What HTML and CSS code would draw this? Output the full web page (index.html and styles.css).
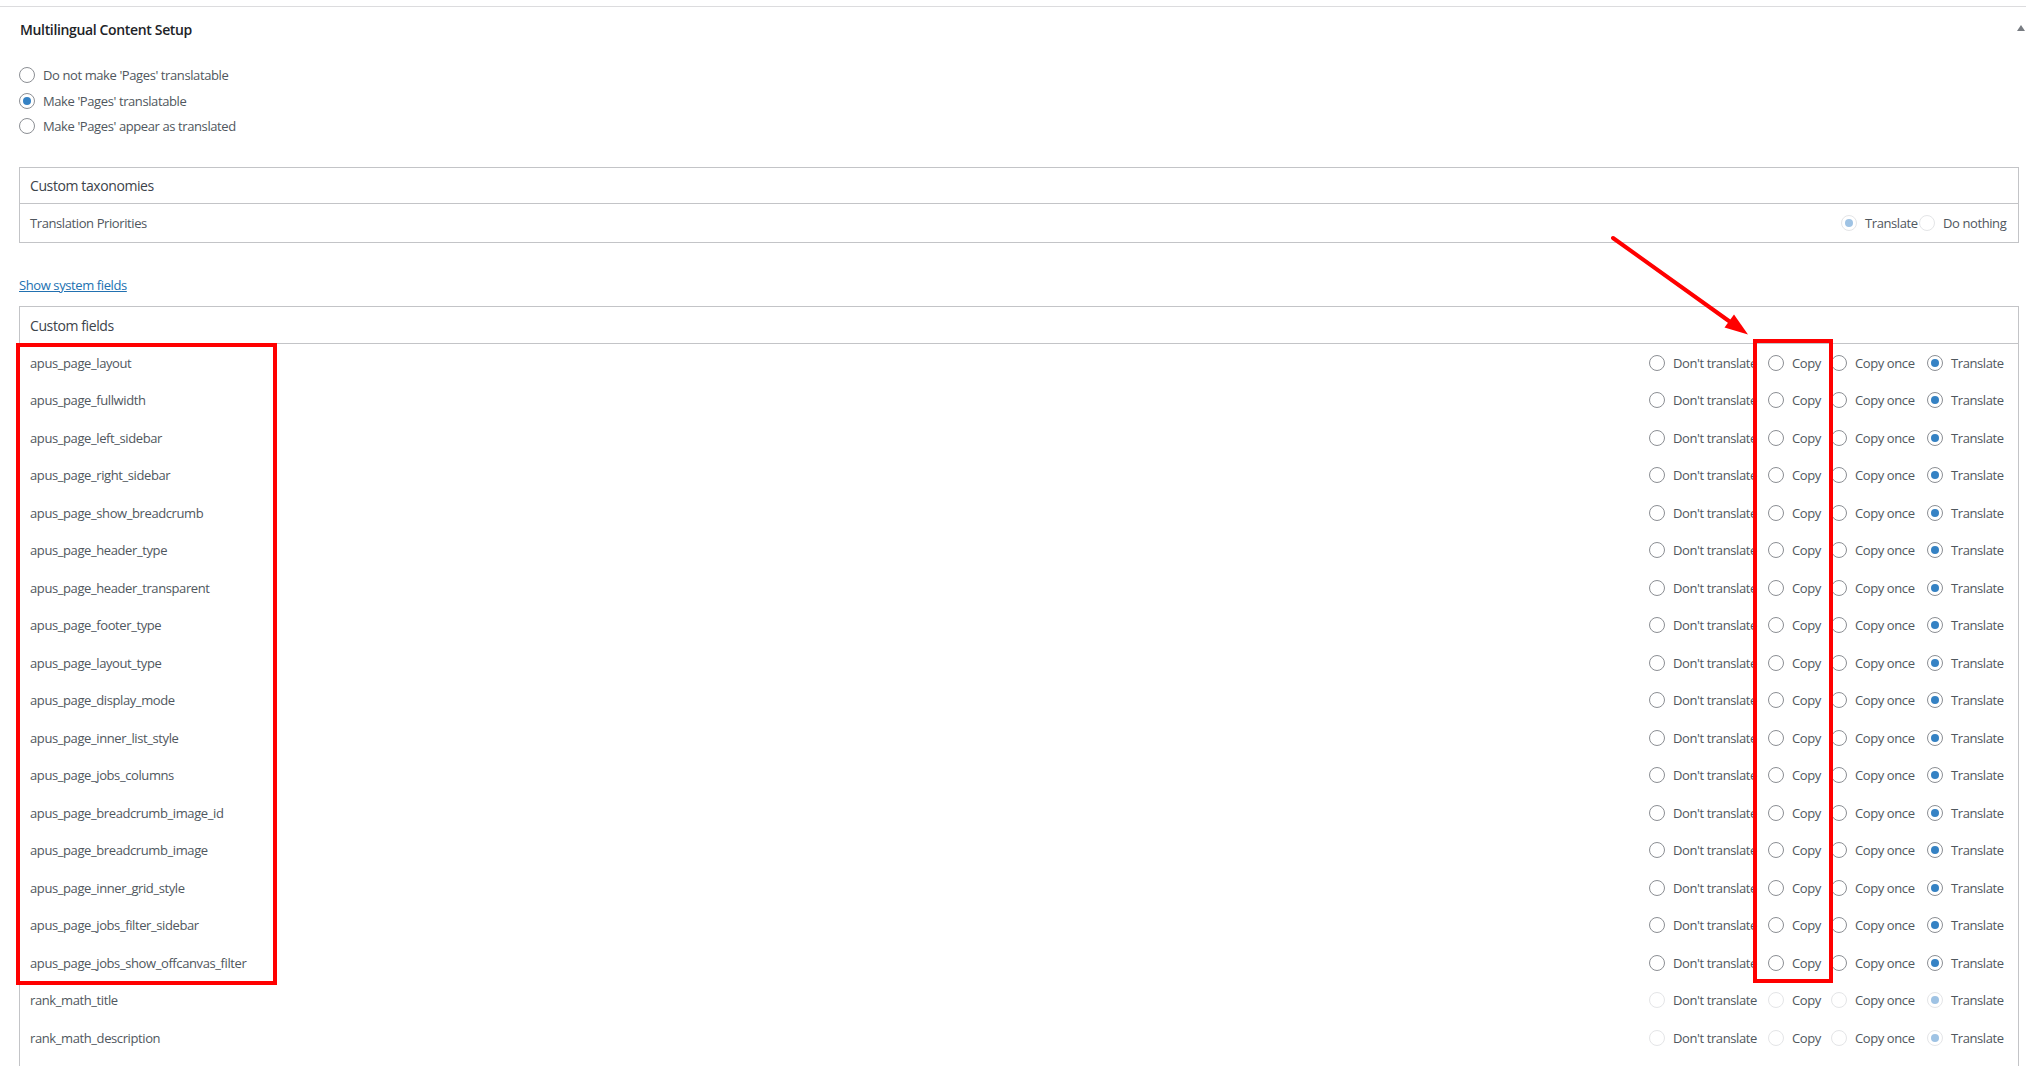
FILE: index.html
```html
<!DOCTYPE html>
<html>
<head>
<meta charset="utf-8">
<link rel="stylesheet" href="styles.css">
</head>
<body>
<div class="topline"></div>
<div class="wrap">
  <div class="section-head">
    <h2 class="title">Multilingual Content Setup</h2>
    <span class="toggle"></span>
  </div>
  <div class="mode-list">
    <label class="mode"><input class="rb" type="radio" name="mode"><span>Do not make 'Pages' translatable</span></label>
    <label class="mode"><input class="rb" type="radio" name="mode" checked><span>Make 'Pages' translatable</span></label>
    <label class="mode"><input class="rb" type="radio" name="mode"><span>Make 'Pages' appear as translated</span></label>
  </div>

  <div class="box tax">
    <div class="box-head">Custom taxonomies</div>
    <div class="row tax-row">
      <span class="name">Translation Priorities</span>
      <div class="opts opts-tax">
        <label class="opt"><input class="rb" type="radio" name="tp" checked disabled><span>Translate</span></label>
        <label class="opt"><input class="rb" type="radio" name="tp" disabled><span>Do nothing</span></label>
      </div>
    </div>
  </div>

  <div class="link-line"><a class="sys-link" href="#">Show system fields</a></div>

  <div class="box cf">
    <div class="box-head cf-head">Custom fields</div>
    <div class="row"><span class="name">apus_page_layout</span><div class="opts opts-cf"><label class="opt"><input class="rb" type="radio" name="f1"><span>Don't translate</span></label><label class="opt"><input class="rb" type="radio" name="f1"><span>Copy</span></label><label class="opt"><input class="rb" type="radio" name="f1"><span>Copy once</span></label><label class="opt"><input class="rb" type="radio" name="f1" checked><span>Translate</span></label></div></div>
    <div class="row"><span class="name">apus_page_fullwidth</span><div class="opts opts-cf"><label class="opt"><input class="rb" type="radio" name="f2"><span>Don't translate</span></label><label class="opt"><input class="rb" type="radio" name="f2"><span>Copy</span></label><label class="opt"><input class="rb" type="radio" name="f2"><span>Copy once</span></label><label class="opt"><input class="rb" type="radio" name="f2" checked><span>Translate</span></label></div></div>
    <div class="row"><span class="name">apus_page_left_sidebar</span><div class="opts opts-cf"><label class="opt"><input class="rb" type="radio" name="f3"><span>Don't translate</span></label><label class="opt"><input class="rb" type="radio" name="f3"><span>Copy</span></label><label class="opt"><input class="rb" type="radio" name="f3"><span>Copy once</span></label><label class="opt"><input class="rb" type="radio" name="f3" checked><span>Translate</span></label></div></div>
    <div class="row"><span class="name">apus_page_right_sidebar</span><div class="opts opts-cf"><label class="opt"><input class="rb" type="radio" name="f4"><span>Don't translate</span></label><label class="opt"><input class="rb" type="radio" name="f4"><span>Copy</span></label><label class="opt"><input class="rb" type="radio" name="f4"><span>Copy once</span></label><label class="opt"><input class="rb" type="radio" name="f4" checked><span>Translate</span></label></div></div>
    <div class="row"><span class="name">apus_page_show_breadcrumb</span><div class="opts opts-cf"><label class="opt"><input class="rb" type="radio" name="f5"><span>Don't translate</span></label><label class="opt"><input class="rb" type="radio" name="f5"><span>Copy</span></label><label class="opt"><input class="rb" type="radio" name="f5"><span>Copy once</span></label><label class="opt"><input class="rb" type="radio" name="f5" checked><span>Translate</span></label></div></div>
    <div class="row"><span class="name">apus_page_header_type</span><div class="opts opts-cf"><label class="opt"><input class="rb" type="radio" name="f6"><span>Don't translate</span></label><label class="opt"><input class="rb" type="radio" name="f6"><span>Copy</span></label><label class="opt"><input class="rb" type="radio" name="f6"><span>Copy once</span></label><label class="opt"><input class="rb" type="radio" name="f6" checked><span>Translate</span></label></div></div>
    <div class="row"><span class="name">apus_page_header_transparent</span><div class="opts opts-cf"><label class="opt"><input class="rb" type="radio" name="f7"><span>Don't translate</span></label><label class="opt"><input class="rb" type="radio" name="f7"><span>Copy</span></label><label class="opt"><input class="rb" type="radio" name="f7"><span>Copy once</span></label><label class="opt"><input class="rb" type="radio" name="f7" checked><span>Translate</span></label></div></div>
    <div class="row"><span class="name">apus_page_footer_type</span><div class="opts opts-cf"><label class="opt"><input class="rb" type="radio" name="f8"><span>Don't translate</span></label><label class="opt"><input class="rb" type="radio" name="f8"><span>Copy</span></label><label class="opt"><input class="rb" type="radio" name="f8"><span>Copy once</span></label><label class="opt"><input class="rb" type="radio" name="f8" checked><span>Translate</span></label></div></div>
    <div class="row"><span class="name">apus_page_layout_type</span><div class="opts opts-cf"><label class="opt"><input class="rb" type="radio" name="f9"><span>Don't translate</span></label><label class="opt"><input class="rb" type="radio" name="f9"><span>Copy</span></label><label class="opt"><input class="rb" type="radio" name="f9"><span>Copy once</span></label><label class="opt"><input class="rb" type="radio" name="f9" checked><span>Translate</span></label></div></div>
    <div class="row"><span class="name">apus_page_display_mode</span><div class="opts opts-cf"><label class="opt"><input class="rb" type="radio" name="f10"><span>Don't translate</span></label><label class="opt"><input class="rb" type="radio" name="f10"><span>Copy</span></label><label class="opt"><input class="rb" type="radio" name="f10"><span>Copy once</span></label><label class="opt"><input class="rb" type="radio" name="f10" checked><span>Translate</span></label></div></div>
    <div class="row"><span class="name">apus_page_inner_list_style</span><div class="opts opts-cf"><label class="opt"><input class="rb" type="radio" name="f11"><span>Don't translate</span></label><label class="opt"><input class="rb" type="radio" name="f11"><span>Copy</span></label><label class="opt"><input class="rb" type="radio" name="f11"><span>Copy once</span></label><label class="opt"><input class="rb" type="radio" name="f11" checked><span>Translate</span></label></div></div>
    <div class="row"><span class="name">apus_page_jobs_columns</span><div class="opts opts-cf"><label class="opt"><input class="rb" type="radio" name="f12"><span>Don't translate</span></label><label class="opt"><input class="rb" type="radio" name="f12"><span>Copy</span></label><label class="opt"><input class="rb" type="radio" name="f12"><span>Copy once</span></label><label class="opt"><input class="rb" type="radio" name="f12" checked><span>Translate</span></label></div></div>
    <div class="row"><span class="name">apus_page_breadcrumb_image_id</span><div class="opts opts-cf"><label class="opt"><input class="rb" type="radio" name="f13"><span>Don't translate</span></label><label class="opt"><input class="rb" type="radio" name="f13"><span>Copy</span></label><label class="opt"><input class="rb" type="radio" name="f13"><span>Copy once</span></label><label class="opt"><input class="rb" type="radio" name="f13" checked><span>Translate</span></label></div></div>
    <div class="row"><span class="name">apus_page_breadcrumb_image</span><div class="opts opts-cf"><label class="opt"><input class="rb" type="radio" name="f14"><span>Don't translate</span></label><label class="opt"><input class="rb" type="radio" name="f14"><span>Copy</span></label><label class="opt"><input class="rb" type="radio" name="f14"><span>Copy once</span></label><label class="opt"><input class="rb" type="radio" name="f14" checked><span>Translate</span></label></div></div>
    <div class="row"><span class="name">apus_page_inner_grid_style</span><div class="opts opts-cf"><label class="opt"><input class="rb" type="radio" name="f15"><span>Don't translate</span></label><label class="opt"><input class="rb" type="radio" name="f15"><span>Copy</span></label><label class="opt"><input class="rb" type="radio" name="f15"><span>Copy once</span></label><label class="opt"><input class="rb" type="radio" name="f15" checked><span>Translate</span></label></div></div>
    <div class="row"><span class="name">apus_page_jobs_filter_sidebar</span><div class="opts opts-cf"><label class="opt"><input class="rb" type="radio" name="f16"><span>Don't translate</span></label><label class="opt"><input class="rb" type="radio" name="f16"><span>Copy</span></label><label class="opt"><input class="rb" type="radio" name="f16"><span>Copy once</span></label><label class="opt"><input class="rb" type="radio" name="f16" checked><span>Translate</span></label></div></div>
    <div class="row"><span class="name">apus_page_jobs_show_offcanvas_filter</span><div class="opts opts-cf"><label class="opt"><input class="rb" type="radio" name="f17"><span>Don't translate</span></label><label class="opt"><input class="rb" type="radio" name="f17"><span>Copy</span></label><label class="opt"><input class="rb" type="radio" name="f17"><span>Copy once</span></label><label class="opt"><input class="rb" type="radio" name="f17" checked><span>Translate</span></label></div></div>
    <div class="row"><span class="name">rank_math_title</span><div class="opts opts-cf"><label class="opt"><input class="rb" type="radio" name="f18" disabled><span>Don't translate</span></label><label class="opt"><input class="rb" type="radio" name="f18" disabled><span>Copy</span></label><label class="opt"><input class="rb" type="radio" name="f18" disabled><span>Copy once</span></label><label class="opt"><input class="rb" type="radio" name="f18" checked disabled><span>Translate</span></label></div></div>
    <div class="row"><span class="name">rank_math_description</span><div class="opts opts-cf"><label class="opt"><input class="rb" type="radio" name="f19" disabled><span>Don't translate</span></label><label class="opt"><input class="rb" type="radio" name="f19" disabled><span>Copy</span></label><label class="opt"><input class="rb" type="radio" name="f19" disabled><span>Copy once</span></label><label class="opt"><input class="rb" type="radio" name="f19" checked disabled><span>Translate</span></label></div></div>
    <div class="row"><span class="name"></span></div>
  </div>
</div>

<svg class="arrow" width="2026" height="1066" viewBox="0 0 2026 1066">
  <line x1="1613" y1="238" x2="1731" y2="322.5" stroke="#ff0000" stroke-width="4" stroke-linecap="round"/>
  <polygon points="1748,334.5 1724.5,327.5 1734,314.5" fill="#ff0000"/>
</svg>
<div class="hl hl-names"></div>
<div class="hl hl-copy"></div>
</body>
</html>
```

FILE: styles.css
```css
html, body {
  margin: 0;
  padding: 0;
  overflow: hidden;
  background: #ffffff;
}
body {
  font-family: "Open Sans", "Noto Sans", sans-serif;
  font-size: 13px;
  letter-spacing: -0.4px;
  color: #50575e;
  position: relative;
  height: 1066px;
}
.topline {
  height: 0;
  margin-top: 6px;
  border-top: 1px solid #dcdcde;
}
.wrap {
  padding: 0 7px 0 19px;
}
.section-head {
  display: flex;
  align-items: center;
  justify-content: space-between;
  height: 44px;
}
.title {
  margin: 0 0 0 1px;
  font-size: 14px;
  font-weight: 600;
  letter-spacing: -0.35px;
  color: #1d2327;
}
.toggle {
  width: 0;
  height: 0;
  border-left: 4px solid transparent;
  border-right: 4px solid transparent;
  border-bottom: 6px solid #787c82;
  margin-right: -6px;
  margin-top: -2px;
}
.mode-list {
  padding-top: 11.5px;
  display: flex;
  flex-direction: column;
}
.mode {
  display: flex;
  align-items: center;
  gap: 8px;
  height: 25.5px;
}
.rb {
  appearance: none;
  -webkit-appearance: none;
  width: 16px;
  height: 16px;
  margin: 0;
  border: 1px solid #8c8f94;
  border-radius: 50%;
  background: #ffffff;
  display: inline-grid;
  place-content: center;
  flex: none;
  box-sizing: border-box;
}
.rb:checked::before {
  content: "";
  width: 8px;
  height: 8px;
  border-radius: 50%;
  background: #3582c4;
}
.rb:disabled {
  border-color: #e4e5e7;
}
.rb:disabled:checked::before {
  background: #9fc3e4;
}
.box {
  border: 1px solid #c3c4c7;
}
.tax {
  margin-top: 28px;
}
.box-head {
  height: 35px;
  display: flex;
  align-items: center;
  padding-left: 10px;
  border-bottom: 1px solid #c3c4c7;
  color: #3c434a;
  font-size: 14px;
}
.cf-head {
  height: 36px;
}
.row {
  display: flex;
  align-items: center;
  height: 37.5px;
  padding-left: 10px;
}
.tax-row {
  height: 38px;
}
.opts {
  margin-left: auto;
  display: grid;
}
.opts-tax {
  grid-template-columns: 78px 89px;
  margin-right: 10px;
}
.opts-cf {
  grid-template-columns: 119px 63px 96px 73px;
  margin-right: 18px;
}
.opt {
  display: flex;
  align-items: center;
  gap: 8px;
  white-space: nowrap;
}
.link-line {
  margin-top: 32px;
  height: 20px;
  line-height: 20px;
}
.sys-link {
  color: #2271b1;
  text-decoration: underline;
}
.cf {
  margin-top: 11px;
}
.arrow {
  position: absolute;
  left: 0;
  top: 0;
  pointer-events: none;
}
.hl {
  position: absolute;
  border: 4px solid #ff0000;
  box-sizing: border-box;
  pointer-events: none;
}
.hl-names {
  left: 16px;
  top: 343px;
  width: 261px;
  height: 642px;
}
.hl-copy {
  left: 1753px;
  top: 339px;
  width: 80px;
  height: 644px;
}
```
